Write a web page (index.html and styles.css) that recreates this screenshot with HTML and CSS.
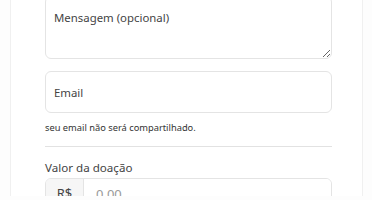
FILE: index.html
```html
<!DOCTYPE html>
<html lang="pt">
<head>
  <meta charset="UTF-8">
  <meta name="viewport" content="width=device-width, initial-scale=1.0">
  <title>Doação</title>
  <link rel="stylesheet" href="styles.css">
</head>
<body>
  <div class="card">
    <form class="form">
      <textarea class="field message" placeholder="Mensagem (opcional)"></textarea>
      <input class="field email" type="email" placeholder="Email">
      <p class="hint">seu email não será compartilhado.</p>
      <hr class="divider">
      <label class="label" for="valor">Valor da doação</label>
      <div class="group">
        <span class="prefix">R$</span>
        <input class="amount" id="valor" type="text" placeholder="0.00">
      </div>
    </form>
  </div>
</body>
</html>
```

FILE: styles.css
```css
body {
  margin: 0;
  background-color: #fdfdfd;
  font-family: "Noto Sans", "Open Sans", sans-serif;
  color: #333;
  overflow: hidden;
}
.card {
  margin: 0 9px 0 10px;
  border-left: 1px solid #f0f0f0;
  border-right: 1px solid #f0f0f0;
  background-color: #fff;
  height: 200px;
  padding: 0 30px 0 34px;
}
.form {
  width: 287px;
  margin-top: -4px;
}
.field {
  display: block;
  box-sizing: border-box;
  width: 100%;
  border: 1px solid #e4e4e4;
  border-radius: 6px;
  background-color: #fff;
  font-family: inherit;
  font-size: 11.4px;
  line-height: 15px;
  color: #333;
  padding: 0 8px;
  margin: 0;
}
.field::placeholder {
  color: #444;
}
.message {
  height: 63px;
  padding-top: 13px;
  resize: vertical;
}
.email {
  height: 42px;
  margin-top: 12px;
}
.hint {
  margin: 8px 0 0;
  font-size: 9.3px;
  line-height: 14px;
  color: #333;
}
.divider {
  border: 0;
  border-top: 1px solid #e2e2e2;
  margin: 11px 0 0;
}
.label {
  display: block;
  margin-top: 13px;
  font-size: 11.6px;
  line-height: 16px;
  color: #444;
}
.group {
  display: flex;
  margin-top: 2px;
  height: 38px;
  border: 1px solid #e4e4e4;
  border-radius: 6px;
  overflow: hidden;
}
.prefix {
  width: 37px;
  background-color: #f6f6f6;
  border-right: 1px solid #e4e4e4;
  text-align: center;
  line-height: 28px;
  font-size: 13px;
  color: #444;
}
.amount {
  flex: 1;
  border: 0;
  padding: 0 12px 8px;
  font-family: inherit;
  font-size: 13px;
}
.amount::placeholder {
  color: #999;
}
```
